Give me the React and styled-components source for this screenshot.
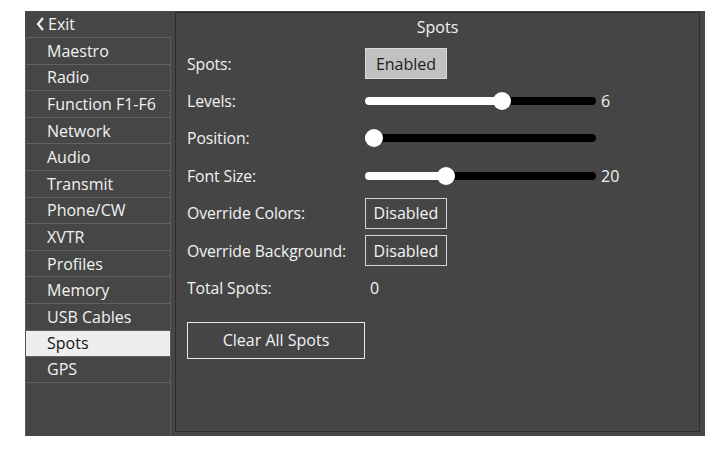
import React from "react";
import styled, { createGlobalStyle } from "styled-components";

const Global = createGlobalStyle`
  html, body { margin: 0; padding: 0; background: #ffffff; }
  body { font-family: "Open Sans", "Noto Sans", sans-serif; }
  * { box-sizing: border-box; }
`;

const Frame = styled.div`
  margin: 11px 0 0 25px;
  width: 680px;
  height: 425px;
  background: #464646;
  display: flex;
  color: #f2f2f2;
  font-size: 16px;
`;

const Sidebar = styled.div`
  width: 146px;
  display: flex;
  flex-direction: column;
`;

const ExitRow = styled.div`
  height: 26px;
  display: flex;
  align-items: center;
  gap: 3px;
  padding-left: 11px;
  font-size: 16px;
`;

const NavList = styled.div`
  flex: 1;
  border-left: 1px solid #5a5a5a;
  border-right: 1px solid #5a5a5a;
  display: flex;
  flex-direction: column;
`;

const NavItem = styled.div`
  height: 26.6px;
  border-top: 1px solid #626262;
  display: flex;
  align-items: center;
  padding-left: 21px;
  font-size: 16px;
  background: ${(p) => (p.$active ? "#eeeeee" : "transparent")};
  color: ${(p) => (p.$active ? "#111111" : "#f2f2f2")};
  &:last-child { border-bottom: 1px solid #626262; }
`;

const Panel = styled.div`
  flex: 1;
  margin: 1px 5px 4px 4px;
  border: 1px solid #2c2c2c;
  background: #454545;
  display: flex;
  flex-direction: column;
  padding: 0 11px;
`;

const Title = styled.div`
  height: 32px;
  padding-bottom: 4px;
  display: flex;
  align-items: center;
  justify-content: center;
  font-size: 16px;
`;

const Form = styled.div`
  display: grid;
  grid-template-columns: 178px 1fr;
  grid-auto-rows: 37.4px;
  align-items: center;
`;

const Label = styled.div`
  font-size: 15.8px;
  letter-spacing: -0.1px;
`;

const Toggle = styled.div`
  width: 82px;
  height: 31px;
  display: flex;
  align-items: center;
  justify-content: center;
  font-size: 16px;
  border: ${(p) => (p.$on ? "1px solid #dadada" : "1.5px solid #d4d4d4")};
  background: ${(p) => (p.$on ? "#c1c1c1" : "transparent")};
  color: ${(p) => (p.$on ? "#1c1c1c" : "#f4f4f4")};
`;

const SliderRow = styled.div`
  display: flex;
  align-items: center;
  gap: 5px;
`;

const Track = styled.div`
  position: relative;
  width: 231px;
  height: 8px;
  border-radius: 4px;
  background: #000000;
`;

const Fill = styled.div`
  height: 8px;
  border-radius: 4px;
  background: #ffffff;
`;

const Thumb = styled.div`
  position: absolute;
  top: 50%;
  width: 18px;
  height: 18px;
  margin: -9px 0 0 -9px;
  border-radius: 50%;
  background: #ffffff;
`;

const Value = styled.div`
  font-size: 16px;
  padding-left: ${(p) => p.$pad || 0}px;
`;

const ClearButton = styled.div`
  margin-top: 15px;
  width: 178px;
  height: 37px;
  border: 1.5px solid #e6e6e6;
  display: flex;
  align-items: center;
  justify-content: center;
  font-size: 16px;
`;

const Slider = ({ pos, value }) => (
  <SliderRow>
    <Track>
      <Fill style={{ width: pos }} />
      <Thumb style={{ left: pos }} />
    </Track>
    {value !== undefined && <Value>{value}</Value>}
  </SliderRow>
);

const Chevron = () => (
  <svg width="9" height="14" viewBox="0 0 9 14">
    <polyline points="7,1 2,7 7,13" fill="none" stroke="#f2f2f2" strokeWidth="2.2" />
  </svg>
);

const items = [
  "Maestro", "Radio", "Function F1-F6", "Network", "Audio", "Transmit",
  "Phone/CW", "XVTR", "Profiles", "Memory", "USB Cables", "Spots", "GPS",
];

export default function App() {
  return (
    <>
      <Global />
      <Frame>
        <Sidebar>
          <ExitRow>
            <Chevron />
            <span>Exit</span>
          </ExitRow>
          <NavList>
            {items.map((it) => (
              <NavItem key={it} $active={it === "Spots"}>{it}</NavItem>
            ))}
          </NavList>
        </Sidebar>
        <Panel>
          <Title>Spots</Title>
          <Form>
            <Label>Spots:</Label>
            <Toggle $on>Enabled</Toggle>
            <Label>Levels:</Label>
            <Slider pos={137} value="6" />
            <Label>Position:</Label>
            <Slider pos={9} />
            <Label>Font Size:</Label>
            <Slider pos={81} value="20" />
            <Label>Override Colors:</Label>
            <Toggle>Disabled</Toggle>
            <Label>Override Background:</Label>
            <Toggle>Disabled</Toggle>
            <Label>Total Spots:</Label>
            <Value $pad={5}>0</Value>
          </Form>
          <ClearButton>Clear All Spots</ClearButton>
        </Panel>
      </Frame>
    </>
  );
}
